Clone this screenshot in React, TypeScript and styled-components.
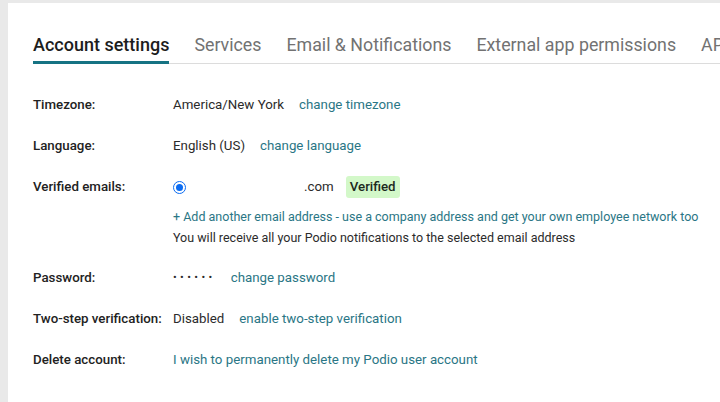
import React from 'react'
import styled, { createGlobalStyle } from 'styled-components'

const GlobalStyle = createGlobalStyle`
  html, body {
    margin: 0;
    padding: 0;
    background: #e9e9e9;
    font-family: Roboto, 'Liberation Sans', Arial, sans-serif;
  }
`

const Page = styled.div`
  margin: 3px 0 0 8px;
  background: #fff;
  height: 399px;
  padding: 31px 0 0 25px;
  box-sizing: border-box;
  overflow: hidden;
`

const TabBar = styled.div`
  display: flex;
  gap: 25px;
  border-bottom: 1px solid #dcdcdc;
  white-space: nowrap;
`

const Tab = styled.div<{ active?: boolean }>`
  font-size: ${({ active }) => (active ? '18px' : '17.8px')};
  line-height: 22px;
  padding-bottom: 5px;
  color: ${({ active }) => (active ? '#1d1d1d' : '#727272')};
  font-weight: ${({ active }) => (active ? 500 : 400)};
  border-bottom: 3px solid ${({ active }) => (active ? '#167383' : 'transparent')};
  margin-bottom: -1px;
`

const Rows = styled.div`
  display: flex;
  flex-direction: column;
  padding-top: 31px;
  gap: 21px;
`

const Row = styled.div`
  display: grid;
  grid-template-columns: 140px 1fr;
  font-size: 13.3px;
  line-height: 20px;
`

const Label = styled.div`
  color: #222;
  font-weight: 500;
`

const Value = styled.div`
  display: flex;
  flex-direction: column;
  gap: 1px;
  margin-bottom: -1px;
`

const Line = styled.div`
  display: flex;
  align-items: center;
  gap: 15px;
  height: 20px;
  color: #2b2b2b;
`

const Link = styled.a`
  color: #2a7685;
  text-decoration: none;
  cursor: pointer;
`

const AddLink = styled(Link)`
  font-size: 12.5px;
  margin-top: 9px;
`

const Note = styled.div`
  font-size: 12.5px;
  color: #2b2b2b;
`

const Dots = styled.span`
  letter-spacing: 3.4px;
  font-size: 11px;
`

const Radio = styled.span`
  width: 13px;
  height: 13px;
  border-radius: 50%;
  border: 1.5px solid #0b6cf2;
  box-sizing: border-box;
  display: inline-flex;
  align-items: center;
  justify-content: center;
  &::after {
    content: '';
    width: 7px;
    height: 7px;
    border-radius: 50%;
    background: #0b6cf2;
  }
`

const Email = styled.span`
  padding-left: 103px;
`

const Badge = styled.span`
  background: #d3f8c9;
  color: #1d2a1d;
  font-weight: 500;
  padding: 1px 4px;
  border-radius: 3px;
  margin-left: -3px;
`

const tabs = ['Account settings', 'Services', 'Email & Notifications', 'External app permissions', 'API keys']

export default function App() {
  return (
    <>
      <GlobalStyle />
      <Page>
        <TabBar>
          {tabs.map((t, i) => (
            <Tab key={t} active={i === 0}>
              {t}
            </Tab>
          ))}
        </TabBar>
        <Rows>
          <Row>
            <Label>Timezone:</Label>
            <Line>
              America/New York <Link>change timezone</Link>
            </Line>
          </Row>
          <Row>
            <Label>Language:</Label>
            <Line>
              English (US) <Link>change language</Link>
            </Line>
          </Row>
          <Row>
            <Label>Verified emails:</Label>
            <Value>
              <Line>
                <Radio />
                <Email>.com</Email>
                <Badge>Verified</Badge>
              </Line>
              <AddLink>+ Add another email address - use a company address and get your own employee network too</AddLink>
              <Note>You will receive all your Podio notifications to the selected email address</Note>
            </Value>
          </Row>
          <Row>
            <Label>Password:</Label>
            <Line>
              <Dots>••••••</Dots> <Link>change password</Link>
            </Line>
          </Row>
          <Row>
            <Label>Two-step verification:</Label>
            <Line>
              Disabled <Link>enable two-step verification</Link>
            </Line>
          </Row>
          <Row>
            <Label>Delete account:</Label>
            <Line>
              <Link>I wish to permanently delete my Podio user account</Link>
            </Line>
          </Row>
        </Rows>
      </Page>
    </>
  )
}
